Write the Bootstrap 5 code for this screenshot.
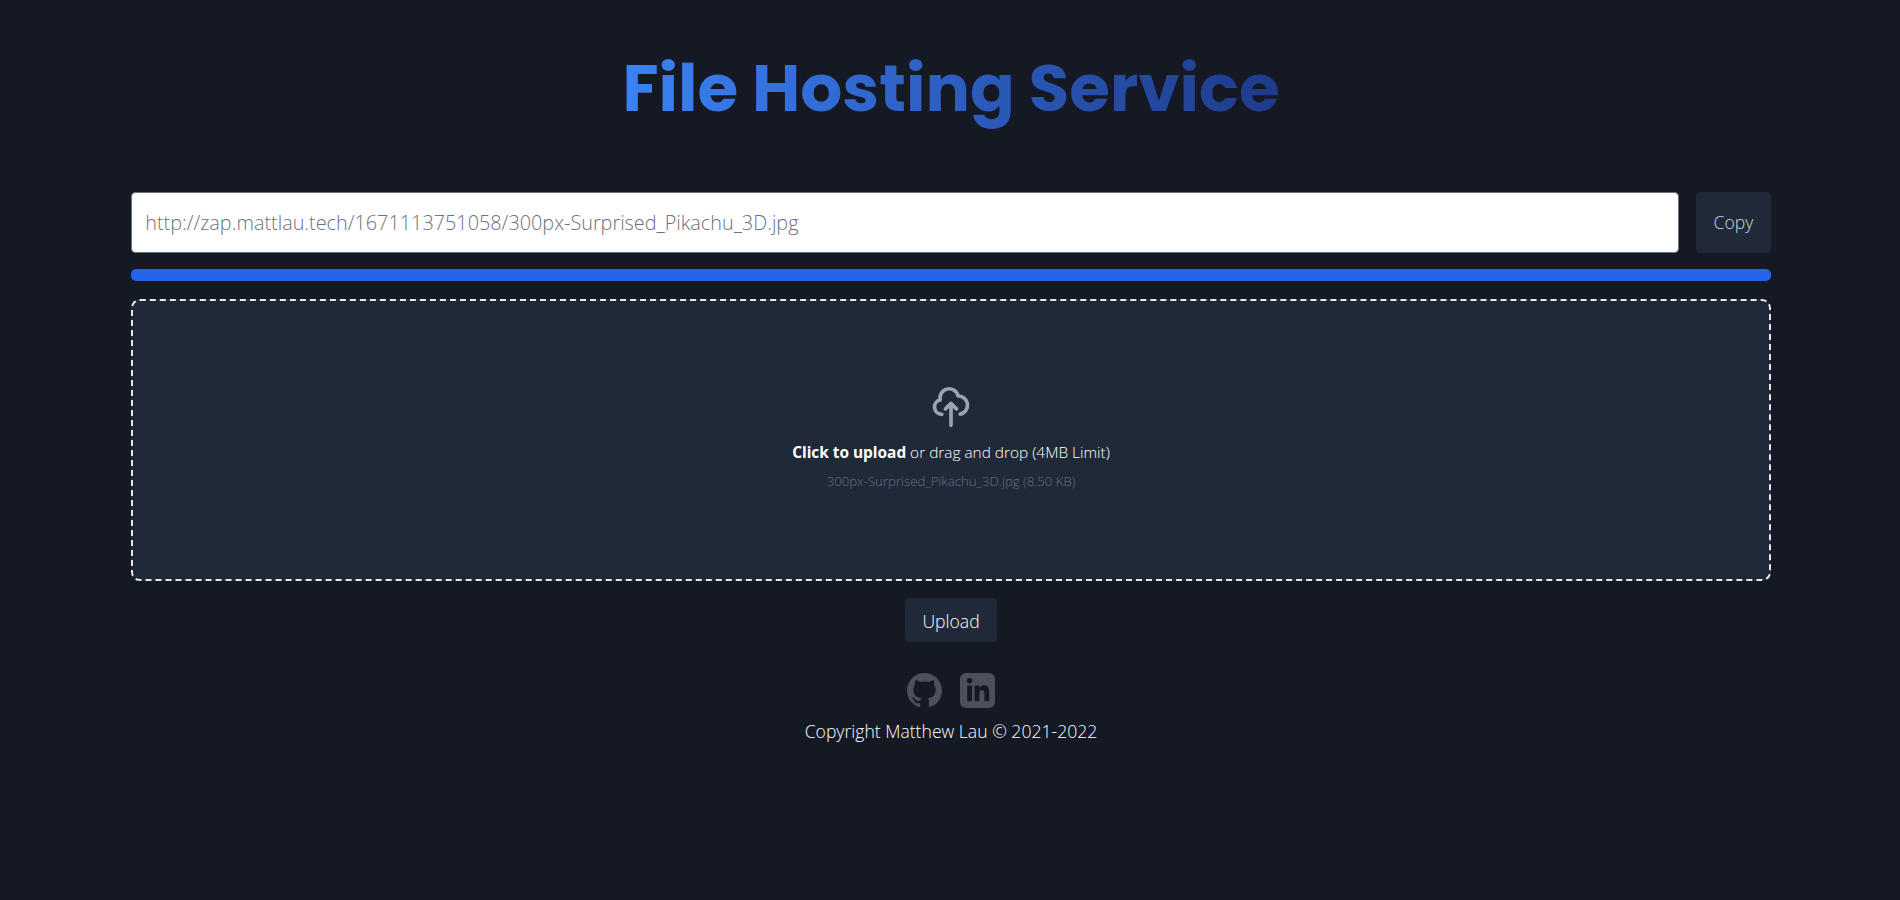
<!DOCTYPE html>
<html lang="en">
<head>
<meta charset="utf-8">
<title>File Hosting Service</title>
<link rel="stylesheet" href="https://cdn.jsdelivr.net/npm/bootstrap@5.3.0/dist/css/bootstrap.min.css">
<style>
body{background:#151924;color:#fff;font-family:"Open Sans",sans-serif;font-weight:300;font-size:17.6px;line-height:26.4px;padding-left:2px}
.shell{width:1640px;padding-top:53px}
.title{font-family:Poppins,Inter,sans-serif;font-weight:700;font-size:66px;line-height:70px;height:86px;background:linear-gradient(90deg,#3b82f6,#1e3a8a);-webkit-background-clip:text;background-clip:text;color:transparent}
.link-row{margin-top:53.4px;gap:17px;height:60.5px}
.link-box{border:1px solid #6b7280;border-radius:4.4px;padding:0 13.2px;font:300 19.83px "Open Sans",sans-serif;color:#6b7280;background:#fff}
.act{background:#1f2937;color:#fff;border:0;border-radius:4.4px;padding:8.8px 17.6px;font-weight:300;font-size:17.6px;line-height:26.4px}
.act-copy{color:#d1d5db}
.act-upload{margin-top:17px;padding-top:9.8px;padding-bottom:7.8px}
.meter{height:11.6px;margin-top:16.5px;border-radius:5px;background:#2563eb}
.drop{height:282px;margin-top:18px;padding-bottom:4px;border:2px dashed #e5e7eb;border-radius:8.8px;background:#1f2937}
.cloud{margin-bottom:13.2px}
.hint{font-size:15.4px;line-height:22px;margin-bottom:8.8px}
.picked{font-size:13.2px;line-height:17.6px;color:#6b7280}
.socials{margin-top:31.5px;gap:18px;color:#4b5059}
.legal{margin-top:9.5px}
</style>
<script src="https://cdn.jsdelivr.net/npm/bootstrap@5.3.0/dist/js/bootstrap.bundle.min.js"></script>
</head>
<body>
<main class="shell mx-auto d-flex flex-column">
  <h1 class="title align-self-center mb-0">File Hosting Service</h1>
  <div class="link-row d-flex">
    <input class="link-box flex-grow-1" readonly value="http://zap.mattlau.tech/1671113751058/300px-Surprised_Pikachu_3D.jpg" aria-label="File link">
    <button class="act act-copy">Copy</button>
  </div>
  <div class="meter"></div>
  <div class="drop d-flex flex-column align-items-center justify-content-center">
    <svg class="cloud" width="44" height="44" viewBox="0 0 24 24" fill="none" stroke="#9ca3af" stroke-width="2" stroke-linecap="round" stroke-linejoin="round"><path d="M7 16a4 4 0 01-.88-7.903A5 5 0 1115.9 6L16 6a5 5 0 011 9.9M15 13l-3-3m0 0l-3 3m3-3v12"/></svg>
    <p class="hint"><span class="fw-bold">Click to upload</span> or drag and drop (4MB Limit)</p>
    <p class="picked mb-0">300px-Surprised_Pikachu_3D.jpg (8.50 KB)</p>
  </div>
  <button class="act act-upload align-self-center">Upload</button>
  <div class="socials d-flex justify-content-center">
    <svg width="35" height="35" viewBox="0 0 16 16" fill="currentColor"><path d="M8 0C3.58 0 0 3.58 0 8c0 3.54 2.29 6.53 5.47 7.59.4.07.55-.17.55-.38 0-.19-.01-.82-.01-1.49-2.01.37-2.53-.49-2.69-.94-.09-.23-.48-.94-.82-1.13-.28-.15-.68-.52-.01-.53.63-.01 1.08.58 1.23.82.72 1.21 1.87.87 2.33.66.07-.52.28-.87.51-1.07-1.78-.2-3.64-.89-3.64-3.95 0-.87.31-1.59.82-2.15-.08-.2-.36-1.02.08-2.12 0 0 .67-.21 2.2.82.64-.18 1.32-.27 2-.27s1.36.09 2 .27c1.53-1.04 2.2-.82 2.2-.82.44 1.1.16 1.92.08 2.12.51.56.82 1.27.82 2.15 0 3.07-1.87 3.75-3.65 3.95.29.25.54.73.54 1.48 0 1.07-.01 1.93-.01 2.2 0 .21.15.46.55.38A8.01 8.01 0 0016 8c0-4.42-3.58-8-8-8z"/></svg>
    <svg width="35" height="35" viewBox="0 0 35 35" fill="currentColor" fill-rule="evenodd"><path d="M6 0h23a6 6 0 016 6v23a6 6 0 01-6 6H6a6 6 0 01-6-6V6a6 6 0 016-6zM9.600 5a2.700 2.700 0 100 5.400 2.700 2.700 0 100-5.400zM7.200 12.500v15.800h4.800V12.500zM14.600 12.500v15.800h4.800V20.200c0-4.300 5-4.500 5 0v8.100h4.900v-10c0-7-7.500-7.600-9.900-3.400v-2.400z"/></svg>
  </div>
  <div class="legal text-center">Copyright Matthew Lau © 2021-2022</div>
</main>
</body>
</html>
